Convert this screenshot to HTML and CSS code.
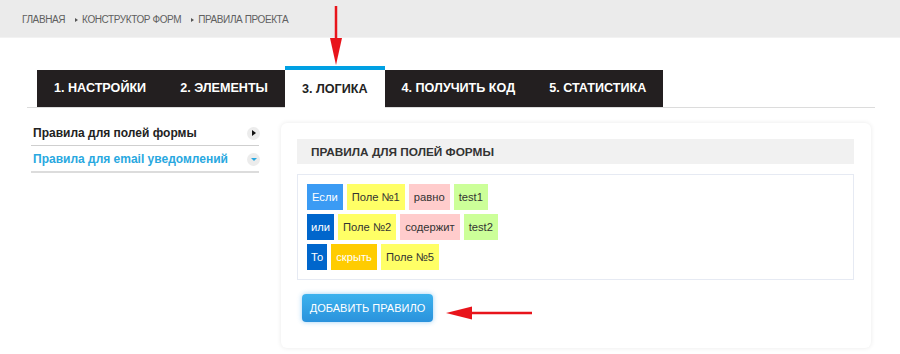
FILE: index.html
```html
<!DOCTYPE html>
<html lang="ru">
<head>
<meta charset="utf-8">
<title>Правила проекта</title>
<link rel="stylesheet" href="styles.css">
</head>
<body>
<header class="topbar">
  <nav class="crumbs">
    <span class="crumb">ГЛАВНАЯ</span>
    <span class="crumb sep">КОНСТРУКТОР ФОРМ</span>
    <span class="crumb sep">ПРАВИЛА ПРОЕКТА</span>
  </nav>
</header>
<div class="page">
  <div class="tabs">
    <div class="tab">1. НАСТРОЙКИ</div>
    <div class="tab">2. ЭЛЕМЕНТЫ</div>
    <div class="tab active">3. ЛОГИКА</div>
    <div class="tab">4. ПОЛУЧИТЬ КОД</div>
    <div class="tab">5. СТАТИСТИКА</div>
  </div>
  <div class="content">
    <aside class="side">
      <div class="side-item first">
        <span>Правила для полей формы</span>
        <span class="dot"><span class="tri-right"></span></span>
      </div>
      <div class="side-item current">
        <span>Правила для email уведомлений</span>
        <span class="dot"><span class="tri-down"></span></span>
      </div>
    </aside>
    <section class="card">
      <div class="card-head">ПРАВИЛА ДЛЯ ПОЛЕЙ ФОРМЫ</div>
      <div class="rules">
        <div class="rule">
          <span class="tag t-if">Если</span>
          <span class="tag t-field">Поле №1</span>
          <span class="tag t-op">равно</span>
          <span class="tag t-val">test1</span>
        </div>
        <div class="rule">
          <span class="tag t-or">или</span>
          <span class="tag t-field">Поле №2</span>
          <span class="tag t-op">содержит</span>
          <span class="tag t-val">test2</span>
        </div>
        <div class="rule">
          <span class="tag t-or">То</span>
          <span class="tag t-act">скрыть</span>
          <span class="tag t-field">Поле №5</span>
        </div>
      </div>
      <button class="add-btn">ДОБАВИТЬ ПРАВИЛО</button>
    </section>
  </div>
</div>
<svg class="arrows" width="900" height="354" viewBox="0 0 900 354">
  <line x1="336" y1="6" x2="336" y2="42" stroke="#e8141b" stroke-width="2.5"/>
  <polygon points="330,38 342,38 336,65" fill="#e8141b"/>
  <line x1="468" y1="313" x2="532" y2="313" stroke="#e8141b" stroke-width="2.5"/>
  <polygon points="472,306.5 472,319.5 446,313" fill="#e8141b"/>
</svg>
</body>
</html>
```
FILE: styles.css
```css
* { box-sizing: border-box; }
html, body { margin: 0; padding: 0; }
body {
  width: 900px;
  height: 354px;
  background: #fff;
  font-family: "Liberation Sans", Arial, sans-serif;
  color: #333;
  position: relative;
  overflow: hidden;
}
.topbar {
  height: 38px;
  background: #ebebeb;
  border-bottom: 1px solid #f2f2f2;
  padding-left: 22px;
}
.crumbs {
  display: flex;
  align-items: center;
  height: 37px;
  padding-top: 2px;
  font-size: 10px;
  letter-spacing: -0.4px;
  color: #606060;
}
.crumb.sep {
  display: flex;
  align-items: center;
  margin-left: 10px;
}
.crumb.sep::before {
  content: "";
  width: 0;
  height: 0;
  border-left: 3px solid #555;
  border-top: 2.5px solid transparent;
  border-bottom: 2.5px solid transparent;
  margin-right: 4px;
}
.page {
  padding: 0 25px 0 27px;
}
.tabs {
  display: flex;
  align-items: flex-end;
  margin-top: 28px;
  padding-left: 10px;
  border-bottom: 1px solid #dcdcdc;
  height: 42px;
}
.tab {
  height: 37px;
  line-height: 37px;
  padding: 0 17px;
  background: #231f20;
  color: #fff;
  font-weight: bold;
  font-size: 12.6px;
  white-space: nowrap;
}
.tab.active {
  background: #fff;
  color: #222;
  border-top: 4px solid #00a0e3;
  height: 42px;
  line-height: 38px;
  margin-bottom: -1px;
}
.content {
  display: flex;
  align-items: flex-start;
  gap: 22px;
  margin-top: 15px;
  padding: 0 4px;
}
.side {
  width: 228px;
  flex: none;
}
.side-item {
  display: flex;
  align-items: center;
  justify-content: space-between;
  font-size: 12px;
  font-weight: bold;
  line-height: 20px;
  padding-left: 2px;
}
.side-item.first {
  color: #222;
  padding-bottom: 2px;
  border-bottom: 1px solid #cfcfcf;
}
.side-item.current {
  color: #29a8e0;
  padding-top: 3px;
  padding-bottom: 2px;
  border-bottom: 2px solid #dcdcdc;
}
.dot {
  width: 13px;
  height: 13px;
  border-radius: 50%;
  background: #ececec;
  display: flex;
  align-items: center;
  justify-content: center;
  margin-right: -1px;
}
.tri-right {
  width: 0; height: 0;
  border-left: 4px solid #111;
  border-top: 3px solid transparent;
  border-bottom: 3px solid transparent;
  margin-left: 1px;
}
.tri-down {
  width: 0; height: 0;
  border-top: 3px solid #29a8e0;
  border-left: 3px solid transparent;
  border-right: 3px solid transparent;
  margin-top: 1px;
}
.card {
  flex: 1;
  background: #fff;
  border-radius: 6px;
  box-shadow: 0 0 5px rgba(0,0,0,0.09);
  padding: 16px 17px 22px 16px;
  height: 225px;
}
.card-head {
  height: 25px;
  line-height: 26px;
  background: #f1f1f1;
  padding-left: 14px;
  font-size: 11.8px;
  font-weight: bold;
  color: #333;
}
.rules {
  margin-top: 10px;
  border: 1px solid #e6eaf3;
  padding: 9px 9px 5px;
}
.rule {
  display: flex;
  gap: 4px;
  margin-bottom: 4px;
}
.tag {
  height: 26px;
  line-height: 26px;
  padding: 0 5px;
  font-size: 11.2px;
  color: #333;
}
.t-if { background: #3b9bf4; color: #fff; }
.t-or { background: #0066cc; color: #fff; padding: 0 4px; }
.t-field { background: #ffff66; }
.t-op { background: #ffcccc; }
.t-val { background: #ccff99; }
.t-act { background: #ffcc00; color: #fff; }
.add-btn {
  display: block;
  margin: 14px 0 0 5px;
  height: 28px;
  width: 131px;
  border: none;
  border-radius: 4px;
  background: linear-gradient(#3cb2ee, #2a92dc);
  box-shadow: 0 0 5px rgba(40,150,230,0.45);
  color: #fff;
  font-family: "Liberation Sans", Arial, sans-serif;
  font-size: 11px;
  padding: 0;
  text-align: center;
}
.arrows {
  position: absolute;
  left: 0;
  top: 0;
  pointer-events: none;
}
```
